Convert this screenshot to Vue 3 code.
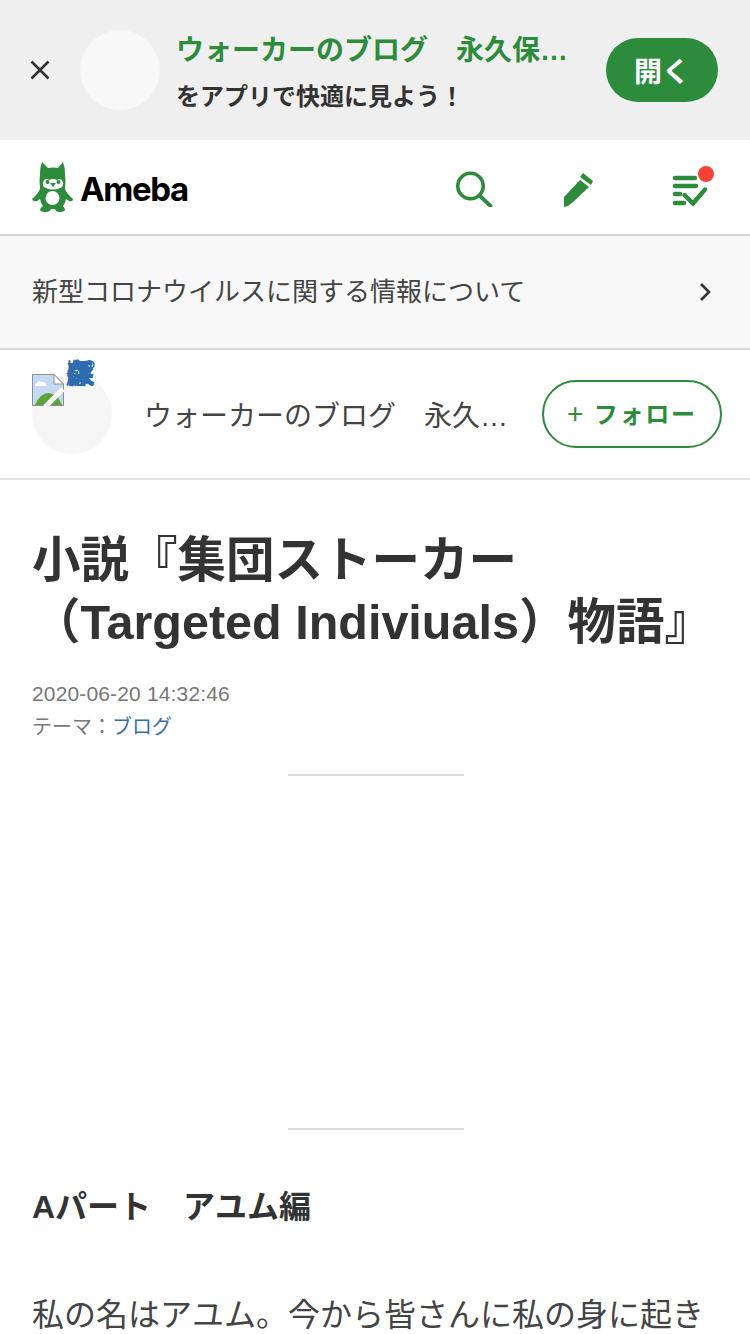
<script setup>
const brokenTitle = '。永久保存版ブログ'
</script>

<template>
  <div class="page">
    <div class="app-banner">
      <button class="banner-close" aria-label="閉じる">
        <svg width="20" height="20" viewBox="0 0 20 20"><path d="M1.5 1.5 L18.5 18.5 M18.5 1.5 L1.5 18.5" stroke="#333" stroke-width="2.6" fill="none" /></svg>
      </button>
      <div class="banner-avatar"></div>
      <div class="banner-text">
        <div class="banner-title">ウォーカーのブログ　永久保…</div>
        <div class="banner-sub">をアプリで快適に見よう！</div>
      </div>
      <button class="banner-open">開く</button>
    </div>

    <header class="site-header">
      <div class="logo">
        <svg class="logo-mark" width="42" height="52" viewBox="0 0 42 52">
          <path fill="#2d8c3c" d="M10 1 L16 7 Q21 6 26 7 L31 1 Q33 6 33 13 Q34 20 33 28 Q35 33 41 38 Q41 41 37 40 L34 38 Q33 43 31 45 Q33 47 33 49 Q32 51 27 51 Q24 51 23 48 L19 48 Q18 51 14 51 Q9 51 8 49 Q8 47 11 45 Q9 43 8 38 L5 40 Q1 41 0 38 Q6 33 8 28 Q7 20 8 13 Q8 6 10 1 Z" />
          <ellipse cx="20.5" cy="37" rx="7" ry="7" fill="#fff" />
          <path fill="#fff" d="M11 21 Q13 16 17 19 Q21 17 25 19 Q29 16 31 21 Q32 26 28 27 Q21 30 14 27 Q10 26 11 21 Z" />
          <circle cx="15.5" cy="21" r="2" fill="#2d8c3c" />
          <circle cx="26.5" cy="21" r="2" fill="#2d8c3c" />
          <path fill="#2d8c3c" d="M18 22 H24 L21 26 Z" />
        </svg>
        <span class="logo-word">Ameba</span>
      </div>
      <nav class="header-icons">
        <svg width="40" height="40" viewBox="0 0 40 40"><circle cx="16.5" cy="19" r="12.7" fill="none" stroke="#2d8c3c" stroke-width="3.6" /><path d="M26 29 L36.5 39" stroke="#2d8c3c" stroke-width="3.8" stroke-linecap="round" /></svg>
        <svg width="36" height="40" viewBox="0 0 36 40"><path fill="#2d8c3c" d="M3 40 V30 L19 13 L28 20 L11 36 Q8 39 3 40 Z" /><path fill="#2d8c3c" d="M22 6 L32 14 L30 18 L19 10 Z" /></svg>
        <div class="todo-icon">
          <svg width="36" height="32" viewBox="0 0 36 32"><g stroke="#2d8c3c" stroke-width="4.4" stroke-linecap="round" fill="none"><path d="M3 3 H23" /><path d="M3 11 H24" /><path d="M3 19 H8" /><path d="M3 28 H12" /><path d="M12.5 20 L21 28.5 L33 14.5" /></g></svg>
          <span class="todo-badge"></span>
        </div>
      </nav>
    </header>

    <a class="notice">
      <span class="notice-text">新型コロナウイルスに関する情報について</span>
      <svg width="12" height="20" viewBox="0 0 12 20"><path d="M2 2 L10 10 L2 18" stroke="#333" stroke-width="2.6" fill="none" /></svg>
    </a>

    <div class="blog-bar">
      <div class="blog-avatar">
        <svg class="broken-img" width="32" height="32" viewBox="0 0 32 32">
          <path d="M.5.5 H22 L31.5 10 V31.5 H.5 Z" fill="#c6d8f4" stroke="#8c8c8c" />
          <path d="M22 .5 V10 H31.5 Z" fill="#fff" stroke="#8c8c8c" />
          <path d="M3 11 Q6 6 10 8 Q15 8 14 12 H3 Z" fill="#fff" />
          <path d="M3 31 Q8 19 17 19 Q26 20 30 31 Z" fill="#5aa63a" />
          <path d="M13 33 L31 15" stroke="#fff" stroke-width="5" />
        </svg>
        <span class="broken-alt">{{ brokenTitle }}</span>
      </div>
      <div class="blog-name">ウォーカーのブログ　永久…</div>
      <button class="follow-btn"><span class="plus">+</span> フォロー</button>
    </div>

    <main class="article">
      <h1 class="title">小説『集団ストーカー（Targeted Indiviuals）物語』</h1>
      <div class="meta date">2020-06-20 14:32:46</div>
      <div class="meta">テーマ：<span class="theme-link">ブログ</span></div>
      <div class="ad-space"></div>
      <h2 class="part">Aパート　アユム編</h2>
      <p class="body-text">私の名はアユム。今から皆さんに私の身に起き</p>
    </main>
  </div>
</template>

<style>
html, body {
  margin: 0;
  background: #fff;
}
</style>

<style scoped>
.page {
  width: 750px;
  height: 1334px;
  overflow: hidden;
  font-family: "Liberation Sans", "Noto Sans CJK JP", sans-serif;
  color: #333;
  background: #fff;
}

.app-banner {
  height: 140px;
  background: #efefef;
  display: flex;
  align-items: center;
  padding: 0 32px 0 30px;
  box-sizing: border-box;
}

.banner-close {
  border: none;
  background: none;
  padding: 0;
  width: 20px;
  height: 20px;
  flex: none;
}

.banner-close svg {
  display: block;
}

.banner-avatar {
  width: 80px;
  height: 80px;
  border-radius: 50%;
  background: #f8f8f8;
  margin-left: 30px;
  flex: none;
}

.banner-text {
  margin-left: 16px;
  flex: 1;
  min-width: 0;
}

.banner-title {
  font-size: 28px;
  line-height: 40px;
  font-weight: 700;
  color: #2d8c3c;
  white-space: nowrap;
  margin-top: 6px;
}

.banner-sub {
  font-size: 24px;
  line-height: 36px;
  margin-top: 8px;
  font-weight: 700;
  color: #333;
}

.banner-open {
  width: 112px;
  height: 64px;
  border: none;
  border-radius: 32px;
  background: #2d8c3c;
  color: #fff;
  font-family: inherit;
  font-size: 28px;
  font-weight: 700;
  flex: none;
}

.site-header {
  height: 96px;
  box-sizing: border-box;
  border-bottom: 2px solid #d4d4d4;
  display: flex;
  align-items: center;
  justify-content: space-between;
  padding: 0 42px 0 32px;
}

.logo {
  display: flex;
  align-items: center;
  gap: 6px;
}

.logo-mark {
  display: block;
}

.logo-word {
  font-family: Inter, sans-serif;
  font-size: 33px;
  font-weight: 700;
  color: #000;
  letter-spacing: -1.4px;
  margin-top: 3px;
}

.header-icons {
  display: flex;
  align-items: center;
  gap: 67px;
}

.todo-icon {
  position: relative;
  width: 36px;
  height: 32px;
  margin: 8px 0 0 8px;
}

.todo-icon svg {
  display: block;
}

.todo-badge {
  position: absolute;
  top: -9px;
  right: -6px;
  width: 16px;
  height: 16px;
  border-radius: 50%;
  background: #f44336;
}

.notice {
  height: 114px;
  box-sizing: border-box;
  background: #f8f8f8;
  border-bottom: 2px solid #d9d9d9;
  display: flex;
  align-items: center;
  justify-content: space-between;
  padding: 0 39px 0 32px;
  font-size: 26px;
  color: #444;
}

.notice-text {
  margin-bottom: 6px;
}

.blog-bar {
  height: 130px;
  box-sizing: border-box;
  border-bottom: 2px solid #e4e4e4;
  display: flex;
  align-items: center;
  padding: 0 28px 0 32px;
}

.blog-avatar {
  position: relative;
  width: 80px;
  height: 80px;
  border-radius: 50%;
  background: #f6f6f6;
  flex: none;
}

.broken-img {
  position: absolute;
  left: 0;
  top: 0;
}

.broken-alt {
  position: absolute;
  left: 33px;
  top: -15px;
  writing-mode: vertical-rl;
  height: 30px;
  width: 14px;
  font-size: 28px;
  line-height: 0.5px;
  color: #2e6bb0;
}

.blog-name {
  margin-left: 32px;
  flex: 1;
  min-width: 0;
  font-size: 28px;
  color: #444;
  white-space: nowrap;
}

.follow-btn {
  width: 180px;
  height: 68px;
  box-sizing: border-box;
  border: 2px solid #2d8c3c;
  border-radius: 34px;
  background: #fff;
  color: #2d8c3c;
  font-family: inherit;
  font-size: 24px;
  font-weight: 700;
  flex: none;
  letter-spacing: 1.8px;
  padding-bottom: 4px;
}

.plus {
  font-weight: 400;
  font-size: 28px;
}

.article {
  padding: 49px 32px 0;
}

.title {
  margin: 0 0 24px;
  font-size: 48.5px;
  line-height: 62px;
  font-weight: 700;
  color: #333;
}

.meta {
  font-size: 20px;
  line-height: 33px;
  color: #777;
}

.date {
  font-size: 21px;
  letter-spacing: 0.15px;
}

.meta + .meta {
  margin-top: 1px;
}

.theme-link {
  color: #3a6ea5;
}

.ad-space {
  margin: 30px 0 0 256px;
  width: 176px;
  height: 356px;
  box-sizing: border-box;
  border-top: 2px solid #ddd;
  border-bottom: 2px solid #ddd;
}

.part {
  margin: 53px 0 0;
  font-size: 32px;
  line-height: 48px;
  font-weight: 700;
}

.body-text {
  margin: 56px 0 0;
  font-size: 32px;
  line-height: 56px;
  white-space: nowrap;
  color: #444;
}
</style>
